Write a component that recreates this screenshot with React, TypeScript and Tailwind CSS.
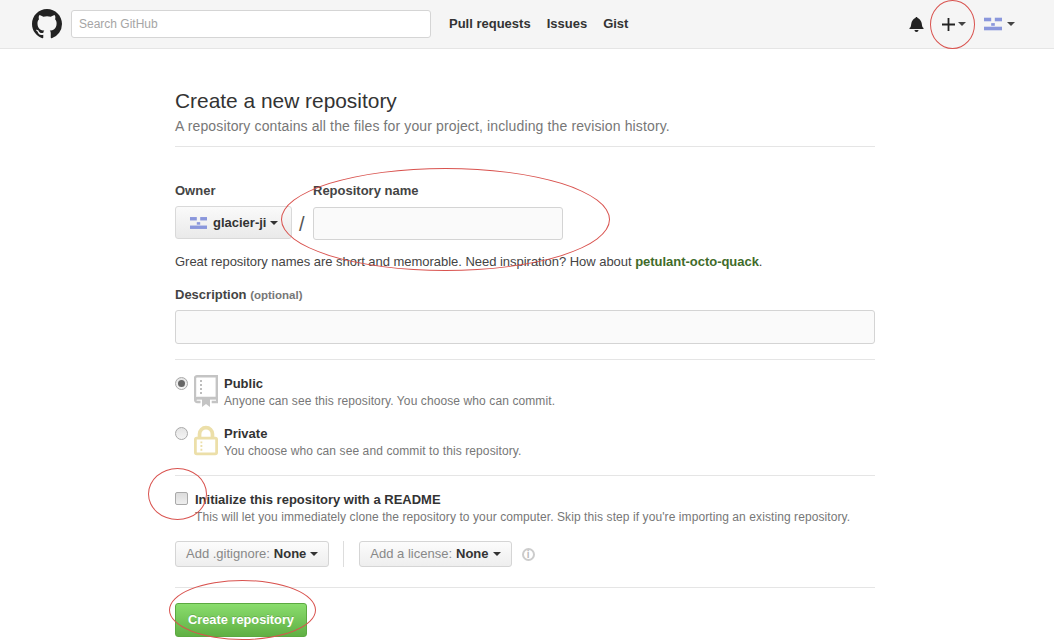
const font = { fontFamily: '"Liberation Sans", Arial, sans-serif' }

function Caret({ className = 'border-t-[#333]' }: { className?: string }) {
    return <span className={`inline-block w-0 h-0 border-x-[4px] border-x-transparent border-t-[4px] ${className}`} />
}

function Identicon({ className }: { className?: string }) {
    return (
        <svg viewBox="0 0 20 14" className={className}>
            <g fill="#8a97dc">
                <rect x="0" y="0" width="8" height="4" />
                <rect x="12" y="0" width="8" height="4" />
                <rect x="8" y="6" width="4" height="3" />
                <rect x="0" y="10" width="20" height="4" />
            </g>
        </svg>
    )
}

function GithubMark() {
    return (
        <svg viewBox="0 0 16 16" className="w-[30px] h-[30px]" fill="#222">
            <path d="M8 0C3.58 0 0 3.58 0 8c0 3.54 2.29 6.53 5.47 7.59.4.07.55-.17.55-.38 0-.19-.01-.82-.01-1.49-2.01.37-2.53-.49-2.69-.94-.09-.23-.48-.94-.82-1.13-.28-.15-.68-.52-.01-.53.63-.01 1.08.58 1.23.82.72 1.21 1.87.87 2.33.66.07-.52.28-.87.51-1.07-1.78-.2-3.64-.89-3.64-3.95 0-.87.31-1.59.82-2.15-.08-.2-.36-1.02.08-2.12 0 0 .67-.21 2.2.82.64-.18 1.32-.27 2-.27s1.36.09 2 .27c1.53-1.04 2.2-.82 2.2-.82.44 1.1.16 1.92.08 2.12.51.56.82 1.27.82 2.15 0 3.07-1.87 3.75-3.65 3.95.29.25.54.73.54 1.48 0 1.07-.01 1.93-.01 2.2 0 .21.15.46.55.38A8.01 8.01 0 0 0 16 8c0-4.42-3.58-8-8-8z" />
        </svg>
    )
}

function BellIcon() {
    return (
        <svg viewBox="0 0 14 16" className="w-[15px] h-[16px]" fill="#222">
            <path d="M14 12v1H0v-1l.73-.58c.77-.77.81-2.55 1.19-4.42C2.69 3.23 6 2 6 2c0-.55.45-1 1-1s1 .45 1 1c0 0 3.39 1.23 4.16 5 .38 1.88.42 3.66 1.19 4.42l.66.58H14zm-7 4c1.11 0 2-.89 2-2H5c0 1.11.89 2 2 2z" />
        </svg>
    )
}

function PlusIcon() {
    return (
        <svg viewBox="0 0 13 13" className="w-[13px] h-[13px]" fill="#222">
            <path d="M5.6 0h1.8v5.6H13v1.8H7.4V13H5.6V7.4H0V5.6h5.6z" />
        </svg>
    )
}

function RepoIcon() {
    return (
        <svg viewBox="0 0 24 32" className="w-[24px] h-[32px] shrink-0">
            <path d="M3 1.2h19.8v22H3a2 2 0 0 0-2 2V3.2a2 2 0 0 1 2-2z" fill="none" stroke="#c4c4c4" strokeWidth="2.4" />
            <path d="M1.2 25a2 2 0 0 1 2-2h20v4h-5.5M6.5 27H3.2a2 2 0 0 1-2-2" fill="none" stroke="#c4c4c4" strokeWidth="2.4" />
            <path d="M8 24h8v8l-4-3-4 3z" fill="#c4c4c4" />
            <path d="M6 5h2v2H6zM6 9h2v2H6zM6 13h2v2H6zM6 17h2v2H6z" fill="#bdbdbd" />
        </svg>
    )
}

function LockIcon() {
    return (
        <svg viewBox="0 0 26 32" className="w-[24px] h-[31px] shrink-0">
            <path d="M6 14V9a7 7 0 0 1 14 0v5" fill="none" stroke="#ecdfa9" strokeWidth="4" />
            <rect x="1.5" y="13.5" width="23" height="17" rx="1.5" fill="none" stroke="#ecdfa9" strokeWidth="3" />
            <path d="M7 17h2v2H7zM7 21h2v2H7zM7 25h2v2H7z" fill="#ecdfa9" />
        </svg>
    )
}

function Radio({ checked }: { checked?: boolean }) {
    return (
        <span className="w-[13px] h-[13px] rounded-full border border-[#a9a9a9] bg-gradient-to-b from-[#e4e4e4] to-[#f4f4f4] flex items-center justify-center shrink-0 mt-[2px]">
            {checked && <span className="w-[7px] h-[7px] rounded-full bg-[#666]" />}
        </span>
    )
}

function SelectButton({ label }: { label: string }) {
    return (
        <button className="h-[26px] px-[10px] flex items-center gap-[4px] border border-[#d5d5d5] rounded-[3px] bg-gradient-to-b from-[#fcfcfc] to-[#eeeeee] text-[13px]">
            <span className="text-[#888]">{label}</span>
            <span className="font-bold text-[#333]">None</span>
            <Caret />
        </button>
    )
}

export default function App() {
    return (
        <div className="relative h-[640px] overflow-hidden bg-white text-[#333]" style={font}>
            <header className="h-[49px] bg-[#f5f5f5] border-b border-[#e5e5e5] flex items-center pl-[32px] pr-[39px]">
                <GithubMark />
                <input
                    placeholder="Search GitHub"
                    className="ml-[9px] w-[360px] h-[28px] px-[7px] bg-white border border-[#d5d5d5] rounded-[3px] text-[12px] placeholder:text-[#a5a5a5] outline-none"
                />
                <nav className="ml-[18px] flex gap-[16px] text-[13px] font-bold text-[#333]">
                    <span>Pull requests</span>
                    <span>Issues</span>
                    <span>Gist</span>
                </nav>
                <div className="ml-auto flex items-center">
                    <BellIcon />
                    <span className="ml-[18px]"><PlusIcon /></span>
                    <Caret className="ml-[3px] border-t-[#444]" />
                    <Identicon className="ml-[18px] w-[18px] h-[14px]" />
                    <Caret className="ml-[5px] border-t-[#444]" />
                </div>
            </header>

            <main className="w-[700px] ml-[175px]">
                <div className="pt-[40px] pb-[10px] border-b border-[#e5e5e5]">
                    <h1 className="text-[20.9px] leading-[24px] text-[#333]">Create a new repository</h1>
                    <p className="text-[14px] tracking-[0.13px] leading-[20px] mt-[3px] text-[#777]">
                        A repository contains all the files for your project, including the revision history.
                    </p>
                </div>

                <div className="mt-[36px] flex items-start">
                    <div>
                        <div className="text-[13px] font-bold leading-[16px] text-[#444]">Owner</div>
                        <button className="mt-[7px] w-[117px] h-[33px] pl-[14px] flex items-center border border-[#d9d9d9] rounded-[3px] bg-gradient-to-b from-[#fafafa] to-[#eaeaea] text-[13px] font-bold">
                            <Identicon className="w-[17px] h-[12px]" />
                            <span className="ml-[6px]">glacier-ji</span>
                            <Caret className="ml-[4px]" />
                        </button>
                    </div>
                    <span className="ml-[7px] mt-[25px] w-[14px] text-[20px] text-[#555] leading-[32px]">/</span>
                    <div>
                        <div className="text-[13px] font-bold leading-[16px] text-[#444]">Repository name</div>
                        <input className="mt-[8px] block w-[250px] h-[33px] bg-[#fafafa] border border-[#d4d4d4] rounded-[3px]" />
                    </div>
                </div>

                <p className="mt-[14px] text-[13px] tracking-[-0.03px] leading-[16px] text-[#444]">
                    Great repository names are short and memorable. Need inspiration? How about{' '}
                    <span className="font-bold text-[#3f6b2a]">petulant-octo-quack</span>.
                </p>

                <div className="mt-[17px] text-[13px] font-bold leading-[16px] text-[#444]">
                    Description <span className="text-[11.5px] text-[#777]">(optional)</span>
                </div>
                <input className="mt-[7px] block w-full h-[34px] bg-[#fafafa] border border-[#d4d4d4] rounded-[3px]" />

                <div className="mt-[15px] border-t border-[#e5e5e5] pt-[15px]">
                    <div className="flex items-start">
                        <Radio checked />
                        <span className="ml-[6px]"><RepoIcon /></span>
                        <div className="ml-[6px]">
                            <div className="text-[13px] font-bold leading-[18px]">Public</div>
                            <div className="text-[12px] tracking-[0.1px] leading-[16px] text-[#777]">Anyone can see this repository. You choose who can commit.</div>
                        </div>
                    </div>
                    <div className="flex items-start mt-[16px]">
                        <Radio />
                        <span className="ml-[6px]"><LockIcon /></span>
                        <div className="ml-[6px]">
                            <div className="text-[13px] font-bold leading-[18px]">Private</div>
                            <div className="text-[12px] tracking-[0.1px] leading-[16px] text-[#777]">You choose who can see and commit to this repository.</div>
                        </div>
                    </div>
                </div>

                <div className="mt-[16px] border-t border-[#e5e5e5] pt-[16px] flex items-start">
                    <span className="w-[13px] h-[13px] border border-[#a9a9a9] rounded-[2px] bg-gradient-to-b from-[#dcdcdc] to-[#eeeeee] shrink-0" />
                    <div className="ml-[7px]">
                        <div className="text-[13px] font-bold leading-[15px]">Initialize this repository with a README</div>
                        <div className="mt-[2px] text-[12px] tracking-[0.085px] leading-[16px] text-[#777] whitespace-nowrap">
                            This will let you immediately clone the repository to your computer. Skip this step if you're importing an existing repository.
                        </div>
                    </div>
                </div>

                <div className="mt-[16px] flex items-center">
                    <SelectButton label="Add .gitignore:" />
                    <span className="ml-[14px] w-px h-[26px] bg-[#ddd]" />
                    <span className="ml-[15px]"><SelectButton label="Add a license:" /></span>
                    <span className="ml-[10px] w-[13px] h-[13px] rounded-full border-2 border-[#ccc] text-[#bbb] text-[10px] font-bold leading-[10px] text-center">i</span>
                </div>

                <div className="mt-[20px] border-t border-[#e5e5e5] pt-[15px]">
                    <button className="w-[132px] h-[34px] border border-[#5ca941] rounded-[3px] bg-gradient-to-b from-[#8add6d] to-[#60b044] text-[12.8px] font-bold text-white [text-shadow:0_-1px_0_rgba(0,0,0,0.15)]">
                        Create repository
                    </button>
                </div>
            </main>

            {/* red hand drawn circles over the page */}
            <div className="absolute left-[930px] top-[0px] w-[45px] h-[49px] rounded-[50%] border border-[#d9534f]" />
            <div className="absolute left-[281px] top-[168px] w-[329px] h-[103px] rounded-[50%] border border-[#d9534f]" />
            <div className="absolute left-[148px] top-[468px] w-[59px] h-[52px] rounded-[50%] border border-[#d9534f]" />
            <div className="absolute left-[169px] top-[580px] w-[147px] h-[60px] rounded-[50%] border border-[#d9534f]" />
        </div>
    )
}
